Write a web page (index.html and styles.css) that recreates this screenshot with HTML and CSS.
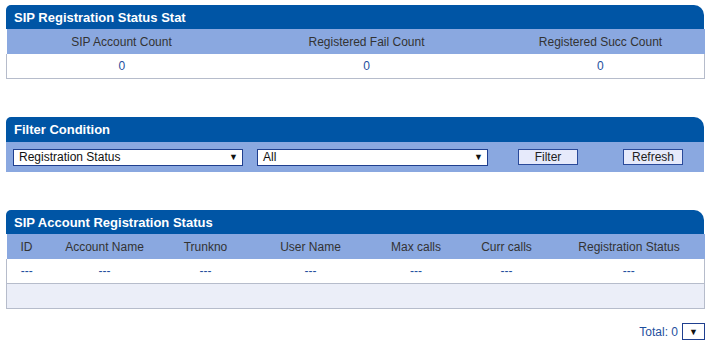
FILE: index.html
```html
<!DOCTYPE html>
<html>
<head>
    <title>SIP Registration Status</title>
    <meta name="viewport" content="width=device-width, initial-scale=1.0">
    <link rel="stylesheet" href="styles.css">
</head>
<body>
    <div class="page">
        <div class="panel">
            <div class="panel-title">SIP Registration Status Stat</div>
            <table class="grid stat">
                <tr class="head">
                    <td class="c1">SIP Account Count</td>
                    <td class="c2">Registered Fail Count</td>
                    <td class="c3">Registered Succ Count</td>
                </tr>
                <tr class="data">
                    <td>0</td>
                    <td>0</td>
                    <td>0</td>
                </tr>
            </table>
        </div>

        <div class="panel panel-filter">
            <div class="panel-title">Filter Condition</div>
            <div class="filter-row">
                <div class="select sel-type"><span>Registration Status</span><span class="arrow">&#9660;</span></div>
                <div class="select sel-value"><span>All</span><span class="arrow">&#9660;</span></div>
                <button class="btn btn-filter">Filter</button>
                <button class="btn btn-refresh">Refresh</button>
            </div>
        </div>

        <div class="panel">
            <div class="panel-title">SIP Account Registration Status</div>
            <table class="grid accounts">
                <tr class="head">
                    <td class="a1">ID</td>
                    <td class="a2">Account Name</td>
                    <td class="a3">Trunkno</td>
                    <td class="a4">User Name</td>
                    <td class="a5">Max calls</td>
                    <td class="a6">Curr calls</td>
                    <td class="a7">Registration Status</td>
                </tr>
                <tr class="data">
                    <td>---</td>
                    <td>---</td>
                    <td>---</td>
                    <td>---</td>
                    <td>---</td>
                    <td>---</td>
                    <td>---</td>
                </tr>
                <tr class="empty">
                    <td colspan="7"></td>
                </tr>
            </table>
        </div>

        <div class="pager">
            <span class="total">Total: 0</span>
            <div class="page-select"><span class="arrow">&#9660;</span></div>
        </div>
    </div>
</body>
</html>
```

FILE: styles.css
```css
body {
    margin: 0;
    font-family: "Liberation Sans", Arial, sans-serif;
    font-size: 12px;
    color: #333;
    background: #fff;
}
.page {
    width: 698px;
    padding: 5px 0 0 6px;
}
.panel {
    margin-bottom: 38px;
}
.panel-filter .panel-title {
    height: 25px;
}
.panel-title {
    height: 24px;
    line-height: 25px;
    padding-left: 8px;
    background: #0055a5;
    color: #fff;
    font-weight: bold;
    font-size: 13px;
    border-radius: 5px 10px 0 0;
}
.grid {
    width: 698px;
    border-collapse: collapse;
    table-layout: fixed;
}
.grid td {
    text-align: center;
    padding: 0;
}
.grid .head td {
    height: 25px;
    background: #8aa8e0;
    color: #333;
}
.grid .data td {
    height: 24px;
    background: #fff;
    color: #1e4f9e;
    border-bottom: 1px solid #b6bccb;
}
.grid .data td:first-child,
.grid .empty td {
    border-left: 1px solid #b6bccb;
}
.grid .data td:last-child,
.grid .empty td {
    border-right: 1px solid #b6bccb;
}
.grid .empty td {
    height: 24px;
    background: #ebeef8;
    border-bottom: 1px solid #b6bccb;
}
.stat .c1 { width: 230px; }
.stat .c2 { width: 260px; }
.stat .c3 { width: 208px; }

.accounts .a1 { width: 40px; }
.accounts .a2 { width: 116px; }
.accounts .a3 { width: 86px; }
.accounts .a4 { width: 124px; }
.accounts .a5 { width: 87px; }
.accounts .a6 { width: 94px; }
.accounts .a7 { width: 151px; }

.filter-row {
    height: 30px;
    background: #8aa8e0;
    display: flex;
    align-items: center;
    padding-left: 7px;
}
.select {
    box-sizing: border-box;
    height: 17px;
    border: 1px solid #1f3f8f;
    background: #fff;
    display: flex;
    align-items: center;
    justify-content: space-between;
    padding: 0 4px 0 5px;
    font-size: 12px;
    color: #111;
}
.arrow {
    font-size: 9px;
    color: #111;
}
.sel-type {
    width: 230px;
}
.sel-value {
    width: 231px;
    margin-left: 14px;
}
.btn {
    box-sizing: border-box;
    width: 60px;
    height: 16px;
    padding: 0;
    border: 1px solid #2a4a9a;
    background: #e6eafb;
    font-family: "Liberation Sans", Arial, sans-serif;
    font-size: 12px;
    color: #222;
}
.btn-filter {
    margin-left: 30px;
}
.btn-refresh {
    margin-left: 45px;
}
.pager {
    display: flex;
    justify-content: flex-end;
    align-items: center;
    margin-top: -24px;
    width: 699px;
}
.total {
    color: #1e4f9e;
    margin-right: 4px;
}
.page-select {
    box-sizing: border-box;
    width: 23px;
    height: 17px;
    border: 1px solid #1f3f8f;
    display: flex;
    align-items: center;
    justify-content: center;
}
```
